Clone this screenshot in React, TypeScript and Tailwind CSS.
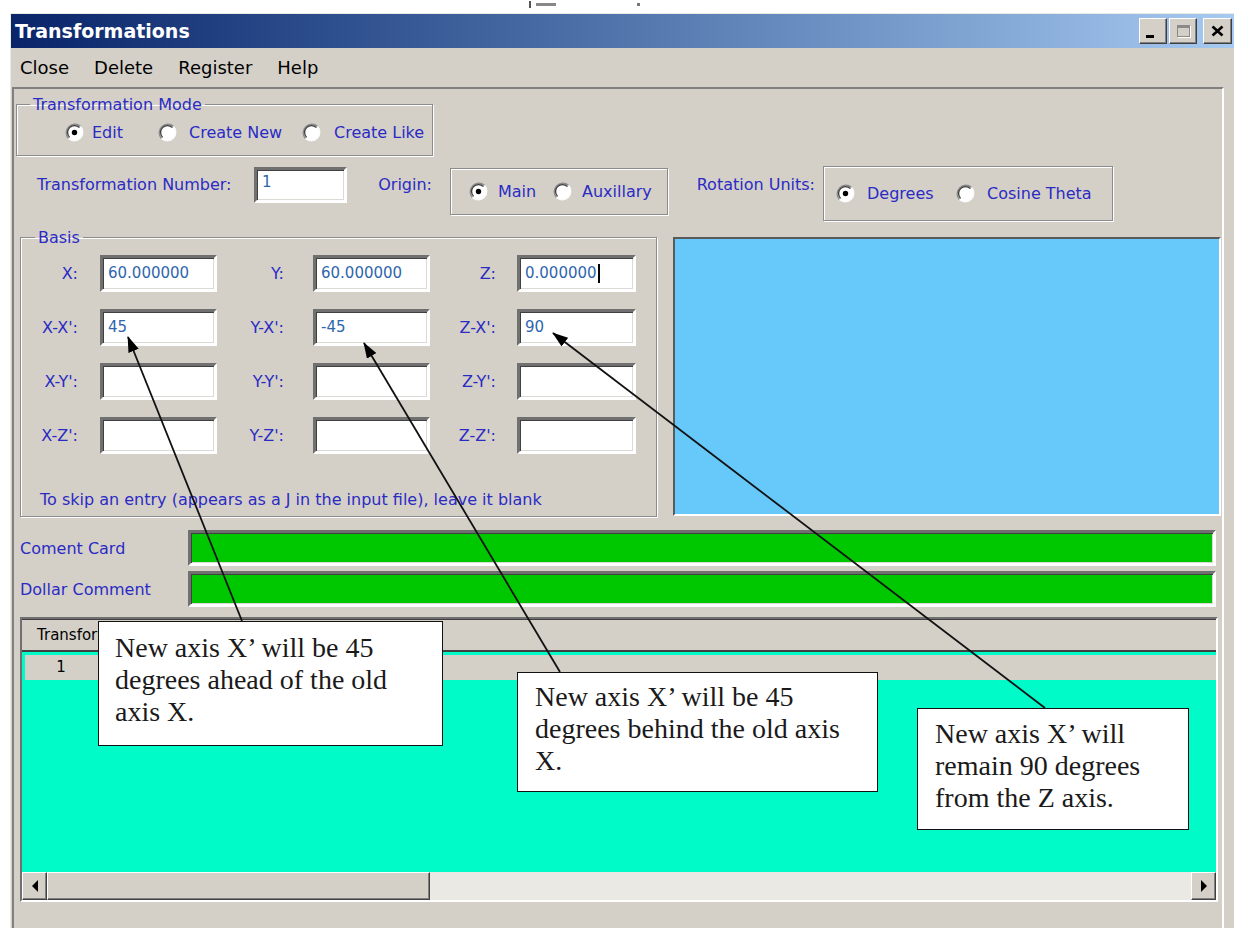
import React from "react"

const label = "text-[#2b2bc4] text-[16px] leading-[19px] whitespace-nowrap"
const valueText = "text-[#2f66ad] text-[15px] leading-[19px]"

// classic 3d bevels
const raised =
  "border border-t-white border-l-white border-b-[#404040] border-r-[#404040] shadow-[inset_-1px_-1px_0_#808080] bg-[#d4d0c8]"
const sunken =
  "border-[3px] border-t-[#707070] border-l-[#707070] border-b-white border-r-white shadow-[inset_1px_1px_0_#404040,inset_-1px_-1px_0_#dcdad4]"
const etched = "border border-[#8c8c8c] shadow-[1px_1px_0_#ffffff,inset_1px_1px_0_#ffffff]"

function Radio({ checked = false }: { checked?: boolean }) {
  return (
    <svg width="19" height="19" viewBox="0 0 19 19" className="shrink-0">
      <circle cx="9.5" cy="9.5" r="8.5" fill="#ffffff" />
      <path d="M3.5 15.5A8.5 8.5 0 0 1 15.5 3.5" fill="none" stroke="#8a8a8a" strokeWidth="1.6" />
      <path d="M4.6 14.4A6.9 6.9 0 0 1 14.4 4.6" fill="none" stroke="#3c3c3c" strokeWidth="1.3" />
      <path d="M15.5 3.5A8.5 8.5 0 0 1 3.5 15.5" fill="none" stroke="#fbfbfb" strokeWidth="1.6" />
      {checked && <circle cx="9.5" cy="9.5" r="2.7" fill="#000000" />}
    </svg>
  )
}

function Option({ text, checked, width, gap = "gap-[10px]" }: { text: string; checked?: boolean; width: string; gap?: string }) {
  return (
    <div className={`flex items-center ${gap} ${width}`}>
      <Radio checked={checked} />
      <span className={label}>{text}</span>
    </div>
  )
}

function Field({ value = "", width = "w-[117px]", caret = false }: { value?: string; width?: string; caret?: boolean }) {
  return (
    <div className={`h-[37px] ${width} bg-white ${sunken} flex items-center pl-[5px]`}>
      <span className={valueText}>{value}</span>
      {caret && <span className="ml-[1px] w-[2px] h-[19px] bg-black" />}
    </div>
  )
}

function BasisRow({ cells }: { cells: { name: string; value?: string; caret?: boolean }[] }) {
  const labelCells = ["w-[79px] pr-[22px]", "w-[96px] pr-[29px]", "w-[87px] pr-[21px]"]
  const widths = ["w-[117px]", "w-[117px]", "w-[119px]"]
  return (
    <div className="flex items-center h-[37px]">
      {cells.map((c, i) => (
        <React.Fragment key={c.name}>
          <div className={`${labelCells[i]} text-right ${label}`}>{c.name}</div>
          <Field value={c.value} width={widths[i]} caret={c.caret} />
        </React.Fragment>
      ))}
    </div>
  )
}

function CaptionButton({ children, className = "" }: { children: React.ReactNode; className?: string }) {
  return (
    <div className={`w-[28px] h-[26px] ${raised} flex items-center justify-center ${className}`}>{children}</div>
  )
}

function ScrollArrow({ dir }: { dir: "left" | "right" }) {
  return (
    <div className={`w-[25px] h-full ${raised} flex items-center justify-center`}>
      <svg width="8" height="12" viewBox="0 0 8 12">
        {dir === "left" ? <path d="M7 0V12L1 6z" fill="#000" /> : <path d="M1 0V12L7 6z" fill="#000" />}
      </svg>
    </div>
  )
}

function Callout({ lines, className }: { lines: string[]; className: string }) {
  return (
    <div
      className={`absolute bg-white border-[1.5px] border-[#111] font-['Liberation_Serif',serif] text-[28px] leading-[32px] text-[#1a1a1a] ${className}`}
    >
      {lines.map((l) => (
        <div key={l} className="whitespace-nowrap">
          {l}
        </div>
      ))}
    </div>
  )
}

export default function App() {
  return (
    <div className="relative w-[1234px] h-[928px] overflow-hidden bg-white font-['DejaVu_Sans',sans-serif]">
      {/* edge of the window behind */}
      <div className="h-[13px] flex items-start pl-[529px] gap-[5px] pt-[1px]">
        <div className="w-[2px] h-[7px] bg-[#555]" />
        <div className="w-[20px] h-[3px] mt-[2px] bg-[#888]" />
        <div className="w-[3px] h-[3px] mt-[2px] ml-[76px] bg-[#777]" />
      </div>

      <div className="ml-[10px] w-[1240px] h-[915px] bg-[#d4d0c8] border-l border-t border-[#ebe9e4] flex flex-col">
        {/* title bar */}
        <div className="h-[34px] w-[1223px] bg-linear-to-r from-[#0a246a] to-[#a6caf0] flex items-center justify-between pl-[4px] pr-[2px]">
          <span className="text-white font-bold text-[19px] leading-[22px]">Transformations</span>
          <div className="flex items-center">
            <CaptionButton>
              <div className="w-[8px] h-[3px] bg-black mt-[10px] -ml-[6px]" />
            </CaptionButton>
            <CaptionButton className="ml-[2px]">
              <div className="w-[13px] h-[12px] border border-[#8a8a8a] border-t-[3px] shadow-[1px_1px_0_#ffffff]" />
            </CaptionButton>
            <CaptionButton className="ml-[6px] w-[29px]">
              <svg width="13" height="12" viewBox="0 0 13 12">
                <path d="M1.5 1.5L11.5 10.5M11.5 1.5L1.5 10.5" stroke="#000" strokeWidth="2.6" />
              </svg>
            </CaptionButton>
          </div>
        </div>

        {/* menu */}
        <div className="h-[39px] flex items-center pl-[9px] gap-[25px] text-[18px] text-black">
          <span>Close</span>
          <span>Delete</span>
          <span>Register</span>
          <span>Help</span>
        </div>

        {/* client area */}
        <div className="flex-1 ml-[1px] w-[1212px] border-t-2 border-l-2 border-r-2 border-t-[#808080] border-l-[#808080] border-r-white flex flex-col">
          <fieldset className={`ml-[2px] mt-[6px] w-[416px] h-[61px] ${etched}`}>
            <legend className={`ml-[13px] px-[3px] ${label} text-[15.5px]`}>Transformation Mode</legend>
            <div className="flex items-center mt-[9px] ml-[48px]">
              <Option text="Edit" checked width="w-[93px]" gap="gap-[8px]" />
              <Option text="Create New" width="w-[144px]" gap="gap-[12px]" />
              <Option text="Create Like" width="w-[130px]" gap="gap-[13px]" />
            </div>
          </fieldset>

          <div className="flex items-start mt-[10px] h-[55px]">
            <div className={`w-[240px] pl-[23px] mt-[9px] ${label}`}>Transformation Number:</div>
            <div className={`mt-[1px] h-[36px] w-[93px] bg-white ${sunken} flex items-start pl-[5px] pt-[3px]`}>
              <span className={valueText}>1</span>
            </div>
            <div className={`w-[103px] text-right pr-[18px] mt-[9px] ${label}`}>Origin:</div>
            <div className={`mt-[2px] w-[218px] h-[47px] ${etched} flex items-center pl-[18px]`}>
              <Option text="Main" checked width="w-[84px]" />
              <Option text="Auxillary" width="w-[100px]" />
            </div>
            <div className={`w-[155px] text-right pr-[8px] mt-[9px] ${label} text-[15.5px]`}>Rotation Units:</div>
            <div className={`w-[290px] h-[55px] ${etched} flex items-center pl-[12px]`}>
              <Option text="Degrees" checked width="w-[120px]" gap="gap-[12px]" />
              <Option text="Cosine Theta" width="w-[140px]" gap="gap-[12px]" />
            </div>
          </div>

          <div className="flex items-start mt-[7px]">
            <fieldset className={`ml-[6px] w-[637px] h-[289px] ${etched}`}>
              <legend className={`ml-[14px] px-[3px] ${label}`}>Basis</legend>
              <div className="mt-[8px] flex flex-col gap-[17px]">
                <BasisRow
                  cells={[
                    { name: "X:", value: "60.000000" },
                    { name: "Y:", value: "60.000000" },
                    { name: "Z:", value: "0.000000", caret: true },
                  ]}
                />
                <BasisRow
                  cells={[
                    { name: "X-X':", value: "45" },
                    { name: "Y-X':", value: "-45" },
                    { name: "Z-X':", value: "90" },
                  ]}
                />
                <BasisRow cells={[{ name: "X-Y':" }, { name: "Y-Y':" }, { name: "Z-Y':" }]} />
                <BasisRow cells={[{ name: "X-Z':" }, { name: "Y-Z':" }, { name: "Z-Z':" }]} />
              </div>
              <div className={`mt-[36px] pl-[19px] ${label} text-[15.5px]`}>
                To skip an entry (appears as a J in the input file), leave it blank
              </div>
            </fieldset>
            <div className="ml-[16px] mt-[9px] w-[548px] h-[279px] bg-[#66c9fa] border-t-2 border-l-2 border-b-2 border-r-2 border-t-[#5a5a5a] border-l-[#5a5a5a] border-b-white border-r-white" />
          </div>

          <div className="flex items-center h-[36px] mt-[13px]">
            <div className={`w-[174px] pl-[6px] ${label}`}>Coment Card</div>
            <div className={`w-[1028px] h-full bg-[#00c800] ${sunken}`} />
          </div>
          <div className="flex items-center h-[36px] mt-[5px]">
            <div className={`w-[174px] pl-[6px] ${label}`}>Dollar Comment</div>
            <div className={`w-[1028px] h-full bg-[#00c800] ${sunken}`} />
          </div>

          {/* grid */}
          <div className="ml-[6px] mt-[10px] w-[1198px] h-[285px] border-2 border-t-[#707070] border-l-[#707070] border-b-white border-r-white flex flex-col bg-[#00fbc9]">
            <div className="h-[31px] bg-[#d4d0c8] flex items-center border-t border-t-[#404040]">
              <div className="w-[76px] overflow-hidden pl-[15px] text-[15px] text-black whitespace-nowrap">Transformation</div>
            </div>
            <div className="h-[2px] bg-[#404040]" />
            <div className="h-[3px]" />
            <div className="ml-[3px] h-[25px] bg-[#d4d0c8] flex items-center">
              <span className="w-[72px] text-center text-[15px] text-black">1</span>
            </div>
            <div className="flex-1" />
            <div className="h-[28px] flex">
              <ScrollArrow dir="left" />
              <div className={`w-[383px] h-full ${raised}`} />
              <div className="flex-1 bg-[#ebe9e4]" />
              <ScrollArrow dir="right" />
            </div>
          </div>
        </div>
      </div>

      {/* annotations */}
      <svg className="absolute inset-0 pointer-events-none" width="1234" height="928">
        <defs>
          <marker id="tip" markerWidth="16" markerHeight="11" refX="15" refY="5.5" orient="auto" markerUnits="userSpaceOnUse">
            <path d="M0 0L16 5.5L0 11z" fill="#000" />
          </marker>
        </defs>
        <line x1="242" y1="621" x2="128" y2="337" stroke="#111" strokeWidth="1.8" markerEnd="url(#tip)" />
        <line x1="560" y1="672" x2="364" y2="343" stroke="#111" strokeWidth="1.8" markerEnd="url(#tip)" />
        <line x1="1045" y1="708" x2="553" y2="333" stroke="#111" strokeWidth="1.8" markerEnd="url(#tip)" />
      </svg>

      <Callout
        className="left-[98px] top-[621px] w-[345px] h-[125px] pl-[16px] pt-[10px]"
        lines={["New axis X’ will be 45", "degrees ahead of the old", "axis X."]}
      />
      <Callout
        className="left-[517px] top-[672px] w-[361px] h-[120px] pl-[17px] pt-[8px]"
        lines={["New axis X’ will be 45", "degrees behind the old axis", "X."]}
      />
      <Callout
        className="left-[917px] top-[708px] w-[272px] h-[122px] pl-[17px] pt-[9px]"
        lines={["New axis X’ will", "remain 90 degrees", "from the Z axis."]}
      />
    </div>
  )
}
